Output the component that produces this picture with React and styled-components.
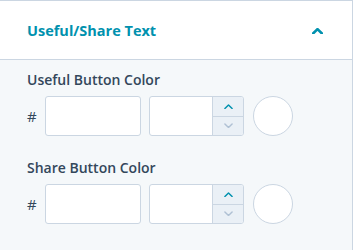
import React from 'react';
import styled, { createGlobalStyle } from 'styled-components';

const GlobalStyle = createGlobalStyle`
  body {
    margin: 0;
    background: #fff;
    font-family: "Open Sans", "Liberation Sans", sans-serif;
  }
`

const Panel = styled.div`
  width: 353px;
  height: 250px;
  border-top: 1px solid #cbd6e2;
  border-right: 1px solid #cbd6e2;
  background: #f5f8fa;
  box-sizing: border-box;
`

const Header = styled.div`
  display: flex;
  align-items: center;
  justify-content: space-between;
  height: 58px;
  padding: 0 29px 0 27px;
  background: #fff;
  border-bottom: 1px solid #cbd6e2;
`

const Title = styled.span`
  font-size: 14.5px;
  font-weight: 700;
  color: #0091ae;
`

const HeaderIcon = styled.span`
  display: flex;
  margin-top: 2px;
  color: #0091ae;
`

const Body = styled.div`
  padding: 10px 27px 0;
  display: flex;
  flex-direction: column;
  gap: 22px;
`

const Field = styled.div`
  display: flex;
  flex-direction: column;
  gap: 7px;
`

const Label = styled.label`
  font-size: 14px;
  font-weight: 600;
  color: #33475b;
`

const Row = styled.div`
  display: flex;
  align-items: center;
`

const Hash = styled.span`
  width: 18px;
  font-size: 15px;
  color: #33475b;
`

const TextInput = styled.div`
  width: ${({ w }) => w}px;
  height: 40px;
  box-sizing: border-box;
  background: #fff;
  border: 1px solid #cbd6e2;
  border-radius: 3px;
`

const Number = styled.div`
  display: flex;
  margin-left: 8px;
  width: 95px;
  height: 40px;
  box-sizing: border-box;
  background: #fff;
  border: 1px solid #cbd6e2;
  border-radius: 3px;
  overflow: hidden;
`

const NumberField = styled.div`
  flex: 1;
`

const Stepper = styled.div`
  width: 30px;
  display: flex;
  flex-direction: column;
  border-left: 1px solid #cbd6e2;
  background: #eaf0f6;
`

const Step = styled.div`
  flex: 1;
  display: flex;
  align-items: center;
  justify-content: center;
  color: ${({ active }) => (active ? '#0091ae' : '#b0c1d4')};
  & + & {
    border-top: 1px solid #cbd6e2;
  }
`

const Swatch = styled.div`
  margin-left: 9px;
  width: 40px;
  height: 40px;
  box-sizing: border-box;
  border-radius: 50%;
  background: #fff;
  border: 1px solid #cbd6e2;
`

const Chevron = ({ up, size = 10, width = 2 }) => (
  <svg width={size} height={size * 0.6} viewBox="0 0 10 6" fill="none">
    <path
      d={up ? 'M1 5 L5 1 L9 5' : 'M1 1 L5 5 L9 1'}
      stroke="currentColor"
      strokeWidth={width}
      strokeLinecap="round"
      strokeLinejoin="round"
    />
  </svg>
);

const ColorField = ({ label }) => (
  <Field>
    <Label>{label}</Label>
    <Row>
      <Hash>#</Hash>
      <TextInput w={96} />
      <Number>
        <NumberField />
        <Stepper>
          <Step active><Chevron up size={9} width={1.6} /></Step>
          <Step><Chevron size={9} width={1.6} /></Step>
        </Stepper>
      </Number>
      <Swatch />
    </Row>
  </Field>
);

export default function App() {
  return (
    <>
      <GlobalStyle />
      <Panel>
        <Header>
          <Title>Useful/Share Text</Title>
          <HeaderIcon>
            <Chevron up size={11} width={2.4} />
          </HeaderIcon>
        </Header>
        <Body>
          <ColorField label="Useful Button Color" />
          <ColorField label="Share Button Color" />
        </Body>
      </Panel>
    </>
  );
}
